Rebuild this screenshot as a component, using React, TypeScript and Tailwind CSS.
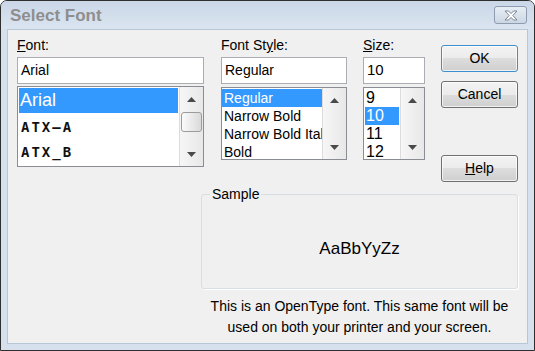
import React from "react";

function Arrow({ dir }: { dir: "up" | "down" }) {
  return (
    <svg width="9" height="5" viewBox="0 0 9 5">
      {dir === "up" ? (
        <polygon points="4.5,0 9,5 0,5" fill="#4a4a4a" />
      ) : (
        <polygon points="0,0 9,0 4.5,5" fill="#4a4a4a" />
      )}
    </svg>
  );
}

function ScrollBar({ thumb }: { thumb?: boolean }) {
  return (
    <div className="w-[24px] flex flex-col bg-gradient-to-r from-[#f6f6f6] to-[#e8e8e8] border-l border-[#dcdcdc]">
      <div className="h-[24px] flex items-center justify-center">
        <Arrow dir="up" />
      </div>
      <div className="flex-1 flex flex-col px-[1px]">
        {thumb && (
          <div className="h-[20px] mt-[1px] rounded-[3px] border border-[#9c9c9c] bg-gradient-to-r from-[#fbfbfb] to-[#d9d9d9]" />
        )}
      </div>
      <div className="h-[24px] flex items-center justify-center">
        <Arrow dir="down" />
      </div>
    </div>
  );
}

const btn =
  "h-[27px] w-full rounded-[3px] border text-[14px] text-black flex items-center justify-center bg-[linear-gradient(#f3f3f3_0%,#ebebeb_50%,#dddddd_50%,#cfcfcf_100%)] shadow-[inset_0_0_0_1px_rgba(255,255,255,0.7)]";

export default function App() {
  return (
    <div className="w-[535px] h-[351px] font-['Liberation_Sans',Arial,sans-serif] bg-white">
      <div className="w-[535px] h-[351px] rounded-t-[7px] border border-[#2e2e2e] bg-[#d6e1ed] flex flex-col">
        {/* Title bar */}
        <div className="h-[28px] flex items-center justify-between pl-[9px] pr-[7px] bg-gradient-to-b from-[#cad7e7] to-[#dbe5f0] rounded-t-[6px]">
          <span className="text-[17px] font-bold text-[#8e8e8e] leading-none">Select Font</span>
          <div className="w-[33px] h-[18px] rounded-[3px] border border-[#8f9caf] bg-gradient-to-b from-[#e7edf4] to-[#ccd7e4] flex items-center justify-center">
            <svg width="14" height="11" viewBox="0 0 14 11">
              <path
                d="M1 1 L4.5 1 L7 3.6 L9.5 1 L13 1 L8.8 5.5 L13 10 L9.5 10 L7 7.4 L4.5 10 L1 10 L5.2 5.5 Z"
                fill="#ffffff"
                stroke="#7a8594"
                strokeWidth="1"
                strokeLinejoin="round"
              />
            </svg>
          </div>
        </div>

        {/* Body */}
        <div className="flex-1 mx-[6px] mb-[6px] bg-[#f0f0f0] border border-[#b8c7d8] flex flex-col">
          <div className="flex pl-[9px] pt-[7px]">
            {/* Font column */}
            <div className="w-[187px] flex flex-col">
              <div className="h-[16px] text-[14px] leading-[16px] text-black">
                <span className="underline">F</span>ont:
              </div>
              <div className="mt-[4px] h-[27px] border border-[#abadb3] bg-white flex items-center pl-[3px] text-[14px] text-black">
                Arial
              </div>
              <div className="mt-[2px] h-[81px] border border-[#8a8d93] bg-white flex">
                <div className="flex-1 flex flex-col px-[1px] pt-[1px] overflow-hidden">
                  <div className="h-[25px] bg-[#3399ff] text-white text-[18px] flex items-center pl-[1px]">Arial</div>
                  <div className="h-[26px] flex items-center pl-[2px] pt-[3px] text-[14px] font-bold text-[#111] font-['DejaVu_Sans_Mono',monospace] tracking-[2px]">
                    ATX—A
                  </div>
                  <div className="h-[26px] flex items-center pl-[2px] text-[14px] font-bold text-[#111] font-['DejaVu_Sans_Mono',monospace] tracking-[2px]">
                    ATX_B
                  </div>
                </div>
                <ScrollBar thumb />
              </div>
            </div>

            {/* Font style column */}
            <div className="w-[126px] ml-[17px] flex flex-col">
              <div className="h-[16px] text-[14px] leading-[16px] text-black">
                Font St<span className="underline">y</span>le:
              </div>
              <div className="mt-[4px] h-[27px] border border-[#abadb3] bg-white flex items-center pl-[3px] text-[14px] text-black">
                Regular
              </div>
              <div className="mt-[3px] h-[73px] border border-[#8a8d93] bg-white flex">
                <div className="flex-1 flex flex-col pt-[1px] overflow-hidden text-[14px] text-black whitespace-nowrap">
                  <div className="h-[18px] shrink-0 bg-[#3399ff] text-white flex items-center pl-[2px]">Regular</div>
                  <div className="h-[18px] shrink-0 flex items-center pl-[2px]">Narrow Bold</div>
                  <div className="h-[18px] shrink-0 flex items-center pl-[2px]">Narrow Bold Italic</div>
                  <div className="h-[18px] shrink-0 flex items-center pl-[2px]">Bold</div>
                </div>
                <ScrollBar />
              </div>
            </div>

            {/* Size column */}
            <div className="w-[62px] ml-[16px] flex flex-col">
              <div className="h-[16px] text-[14px] leading-[16px] text-black">
                <span className="underline">S</span>ize:
              </div>
              <div className="mt-[4px] h-[27px] border border-[#abadb3] bg-white flex items-center pl-[3px] text-[15px] text-black">
                10
              </div>
              <div className="mt-[3px] h-[73px] border border-[#8a8d93] bg-white flex">
                <div className="flex-1 flex flex-col pt-[1px] px-[1px] overflow-hidden text-[16px] text-black">
                  <div className="h-[18px] shrink-0 flex items-center pl-[1px]">9</div>
                  <div className="h-[18px] shrink-0 bg-[#3399ff] text-white flex items-center pl-[1px]">10</div>
                  <div className="h-[18px] shrink-0 flex items-center pl-[1px]">11</div>
                  <div className="h-[18px] shrink-0 flex items-center pl-[1px]">12</div>
                </div>
                <ScrollBar />
              </div>
            </div>

            {/* Buttons */}
            <div className="w-[77px] ml-[16px] flex flex-col pt-[8px]">
              <div className={btn + " border-[#3c8fd0] shadow-[inset_0_0_0_1px_#9fd7f5]"}>OK</div>
              <div className={btn + " mt-[9px] border-[#707070]"}>Cancel</div>
              <div className={btn + " mt-[47px] border-[#707070]"}>
                <span>
                  <span className="underline">H</span>elp
                </span>
              </div>
            </div>
          </div>

          {/* Sample */}
          <div className="ml-[193px] w-[317px] mt-[12px] relative">
            <div className="h-[95px] rounded-[3px] border border-[#d5dfe5] shadow-[1px_1px_0_#ffffff] flex items-center justify-center pt-[14px]">
              <span className="text-[17px] text-black">AaBbYyZz</span>
            </div>
            <span className="absolute left-[9px] top-[-8px] px-[2px] bg-[#f0f0f0] text-[14px] leading-[16px] text-black">
              Sample
            </span>
          </div>
          <div className="ml-[193px] w-[317px] mt-[7px] flex flex-col items-center text-[14px] leading-[21px] text-black">
            <span className="whitespace-nowrap">This is an OpenType font. This same font will be</span>
            <span className="whitespace-nowrap">used on both your printer and your screen.</span>
          </div>
        </div>
      </div>
    </div>
  );
}
